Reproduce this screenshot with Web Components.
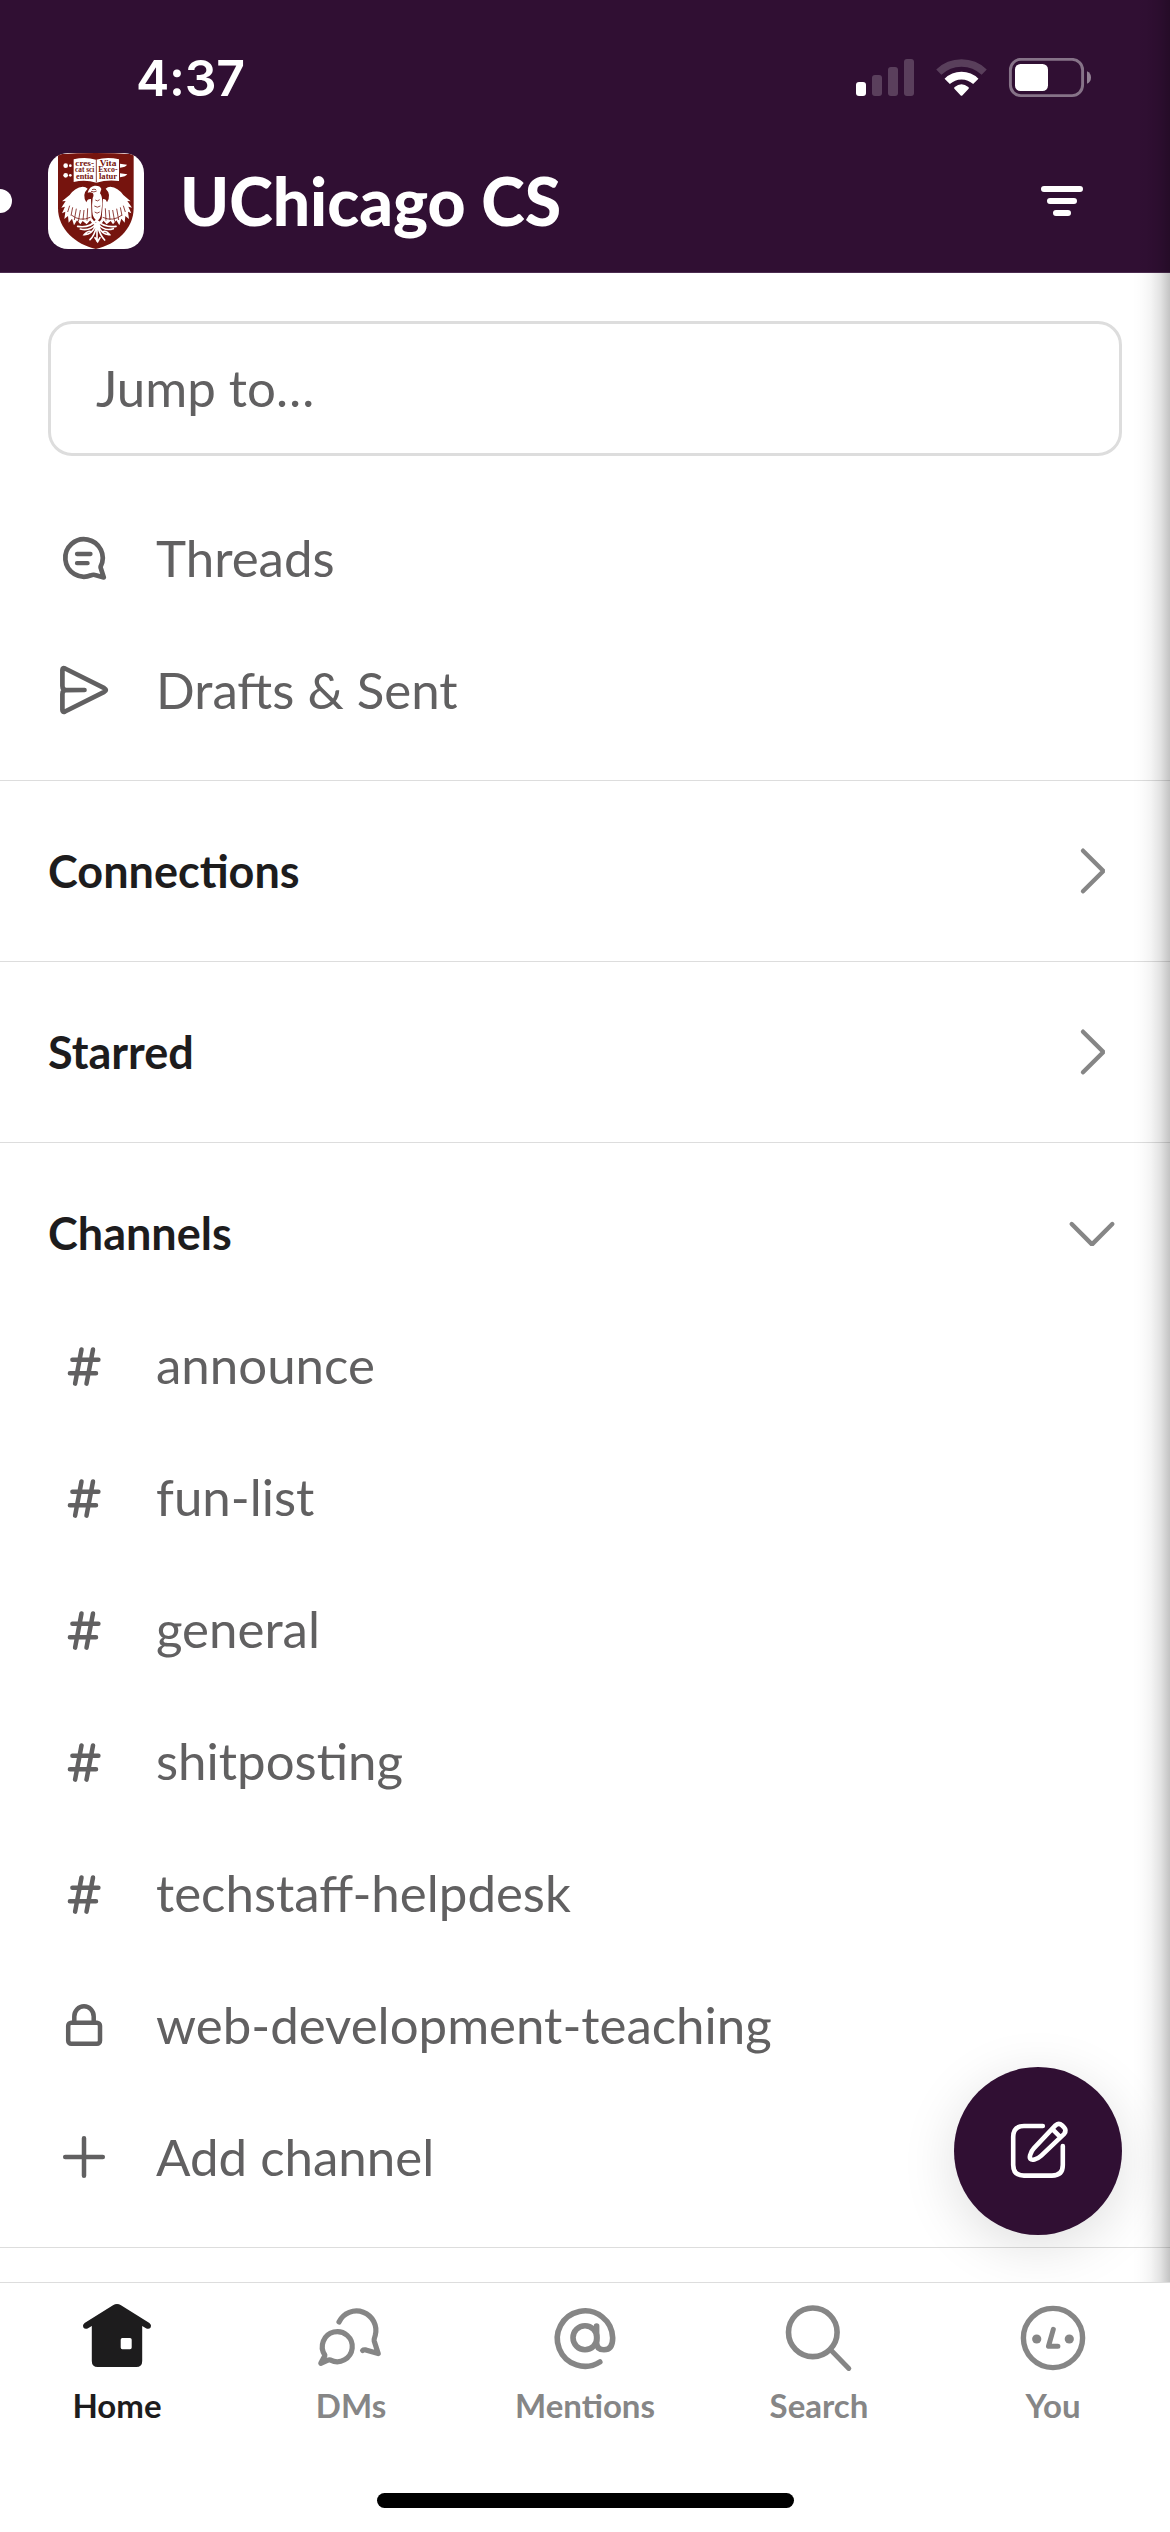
<!DOCTYPE html>
<html lang="en">
<head>
<meta charset="utf-8">
<title>UChicago CS</title>
<style>
html,body{margin:0;padding:0;background:#fff}
body{width:1170px;height:2532px;overflow:hidden;font-family:Lato,"Open Sans",sans-serif;-webkit-font-smoothing:antialiased}
</style>
</head>
<body>
<app-shell>
  <status-bar slot="top" time="4:37"></status-bar>
  <workspace-header slot="top">UChicago CS</workspace-header>
  <jump-field>Jump to…</jump-field>
  <list-group>
    <nav-row icon="threads">Threads</nav-row>
    <nav-row icon="send">Drafts &amp; Sent</nav-row>
  </list-group>
  <section-header icon="right">Connections</section-header>
  <section-header icon="right">Starred</section-header>
  <section-header icon="down" open>Channels</section-header>
  <list-group>
    <nav-row icon="hash">announce</nav-row>
    <nav-row icon="hash">fun-list</nav-row>
    <nav-row icon="hash">general</nav-row>
    <nav-row icon="hash">shitposting</nav-row>
    <nav-row icon="hash">techstaff-helpdesk</nav-row>
    <nav-row icon="lock">web-development-teaching</nav-row>
    <nav-row icon="plus">Add channel</nav-row>
  </list-group>
  <compose-button slot="fab"></compose-button>
  <tab-bar slot="bottom">
    <tab-item icon="home" active>Home</tab-item>
    <tab-item icon="dms">DMs</tab-item>
    <tab-item icon="mentions">Mentions</tab-item>
    <tab-item icon="search">Search</tab-item>
    <tab-item icon="you">You</tab-item>
  </tab-bar>
</app-shell>
<script>
// Every glyph is drawn around the origin of a 72x72 box.
const ICONS = {
  threads: '<g stroke-width="4.7"><path d="M16.6 8.6A18.7 18.7 0 1 0 7 17.3Q9 16.4 11 17L19.8 19.4L17 10.8Q16.4 9.6 16.6 8.6Z"/><path d="M-7-4H6.5M-7 5.2H3.6" stroke-width="4.3"/></g>',
  send: '<path stroke-width="4.7" d="M-21.6-4V-20Q-21.6-22.6-19-21.5L20.3-1.8Q23.4 0 20.3 1.8L-19 21.5Q-21.6 22.6-21.6 20V4Q-21.5.4-18.5.2L.5 0L-18.5-.2Q-21.5-.4-21.6-4Z"/>',
  hash: '<path stroke-width="4.5" d="M-11.6-5.2H14.4M-14.1 8.3H12M-2.5-15.5L-8.9 18.6M9-15.5L2.5 18.6"/>',
  lock: '<g stroke-width="4.5"><rect x="-15.8" y="-2.2" width="31.8" height="21" rx="3"/><path d="M-9.7-2.5V-8.5A9.7 10.2 0 0 1 9.7-8.5V-2.5"/></g>',
  plus: '<path stroke-width="4.5" d="M-18.8 0H18.8M0-18.8V18.8"/>',
  right: '<path stroke-width="4.4" stroke-linejoin="bevel" d="M-9-20.3L11.4 0L-9 20.3"/>',
  down: '<path stroke-width="4.4" stroke-linejoin="bevel" d="M-20.3-9L0 11.4L20.3-9"/>',
  filter: '<path stroke-width="6" d="M-18-12H18M-12 0H12M-6 12H6"/>',
  compose: '<g stroke-width="4.6"><path d="M4.8-25H-14Q-24.8-25-24.8-14V14Q-24.8 24.6-14 24.6H14Q24.8 24.6 24.8 14V-5"/><path d="M-7.8 3.5Q-6.8-.5-4-3.4L17.7-26.3Q20.9-29 24.2-26L26-24.2Q28.9-21 26.2-17.7L3.3 4.2Q.4 7-3.5 7.9Q-9.5 9.2-7.8 3.5ZM14.4-22.4L22.4-14.4" transform="translate(0 .5)"/></g>',
  home: '<path fill="currentColor" fill-rule="evenodd" stroke="none" d="M-4-32.7Q0-35.1 4-32.7L32.4-14.9Q34.8-13.1 33.8-10.7Q32-8.3 29.4-9.6L25.2-12V23Q25.2 29 19.2 29H-19.2Q-25.2 29-25.2 23V-12L-29.4-9.6Q-32-8.3-33.8-10.7Q-34.8-13.1-32.4-14.9ZM5.3 0Q3.7 0 3.7 1.8V9.4Q3.7 11.2 5.3 11.2H13Q14.7 11.2 14.7 9.4V1.8Q14.7 0 13 0Z"/>',
  dms: '<g stroke-width="5.2"><path d="M-26.2 17A15 15 0 1 1-20.4 22.1Q-22 21.6-23.6 22.4L-30.2 25.3L-26.6 18.6Q-26 17.8-26.2 17Z"/><path d="M-12-16A19.4 19.4 0 0 1 24.2-2.500Q22.800 1.500 23.200 3L27.200 15.600L14.800 11.900Q12.600 11.500 11.600 12.500"/></g>',
  mentions: '<g stroke-width="5.6"><circle cx="0" cy="-.2" r="12"/><path d="M11.6-12V4.8Q11.8 11.8 19 11.8Q27.7 11.8 27.7-.2A27.7 27.7 0 1 0 14.8 24"/></g>',
  search: '<g stroke-width="5.6"><circle cx="-6.2" cy="-5.7" r="24.3"/><path d="M12.3 12.6L29.8 30.4" stroke-width="5"/></g>',
  you: '<g stroke-width="5.4"><circle cx="0" cy="0" r="29.6"/><path stroke-width="5" d="M.3-8.6L-4.5 8.3H4.9"/></g><g fill="currentColor" stroke="none"><circle cx="-16.3" cy="1" r="4.6"/><circle cx="16.3" cy="1" r="4.6"/></g>'
};

function define(name, css, html) {
  customElements.define(name, class extends HTMLElement {
    constructor() {
      super();
      const root = this.attachShadow({ mode: 'open' });
      root.innerHTML = '<style>' + css + '</style>' + (typeof html === 'function' ? html(this) : html);
    }
  });
}

define('ui-icon',
  ':host{display:block;flex:none;width:72px;height:72px}svg{display:block;overflow:visible}',
  el => `<svg width="72" height="72" viewBox="-36 -36 72 72" fill="none" stroke="currentColor" stroke-linecap="round" stroke-linejoin="round">${ICONS[el.getAttribute('name')]}</svg>`);

define('app-shell',
  `:host{display:flex;flex-direction:column;width:1170px;height:2532px;background:#fff;overflow:hidden}
   .view{position:relative;flex:1;display:flex;flex-direction:column;min-height:0;overflow:hidden}
   header{flex:none;height:272px;background:#300f33;border-bottom:1px solid #4c2c50;color:#fff}
   main{flex:1;display:flex;flex-direction:column;padding-top:48px;min-height:0}
   .fab{position:absolute;right:48px;bottom:47px}
   .edge{position:absolute;top:0;right:0;bottom:0;width:38px;pointer-events:none;
     background:linear-gradient(90deg,rgba(0,0,0,0),rgba(0,0,0,.012) 25%,rgba(0,0,0,.045) 50%,rgba(0,0,0,.115) 75%,rgba(0,0,0,.235))}`,
  `<div class="view"><header><slot name="top"></slot></header><main><slot></slot></main>
   <div class="fab"><slot name="fab"></slot></div><div class="edge"></div></div><slot name="bottom"></slot>`);

define('status-bar',
  `:host{display:flex;justify-content:space-between;align-items:center;height:156px;box-sizing:border-box;padding:0 79px 0 136px}
   .time{font:600 50px/60px Inter,sans-serif;letter-spacing:-.3px}
   svg{display:block}`,
  el => `<div class="time">${el.getAttribute('time')}</div>
   <svg width="235" height="40" viewBox="856 58 235 40">
    <g fill="#fff"><rect x="856" y="82" width="10" height="14" rx="3"/>
     <g opacity=".2"><rect x="872" y="75" width="10" height="21" rx="3"/><rect x="888" y="67" width="10" height="29" rx="3"/><rect x="904" y="59" width="10" height="37" rx="3"/></g></g>
    <g fill="none" stroke="#fff"><path opacity=".2" stroke-width="7.4" d="M938.8 72.1A32.8 32.8 0 0 1 984.2 72.1"/><path stroke-width="7.6" d="M947.2 81.4A20.5 20.5 0 0 1 975.8 81.4"/></g>
    <path fill="#fff" d="M954.6 89Q953.4 87.9 954.7 86.9Q961.5 81.7 968.3 86.9Q969.6 87.9 968.4 89L962.3 95.4Q961.5 96.2 960.7 95.4Z"/>
    <rect x="1010.4" y="59.4" width="72.2" height="36.2" rx="10.5" fill="none" stroke="#fff" stroke-opacity=".42" stroke-width="2.9"/>
    <rect x="1015" y="64" width="33" height="27" rx="5.5" fill="#fff"/>
    <path d="M1087 71.2Q1091 73 1091 77.5Q1091 82 1087 83.8Z" fill="#fff" fill-opacity=".48"/>
   </svg>`);

define('crest-logo',
  ':host{display:block;flex:none;width:96px;height:96px;border-radius:20px;overflow:hidden;background:#fff}svg{display:block}',
  `<svg width="96" height="96" viewBox="54 39 288 288">
    <path fill="#76140e" d="M84 43Q197 35 311 43V205C311 267 258 314 197.500 327C137 314 84 267 84 205Z"/>
    <g fill="#fff">
     <path d="M131 58Q166 50 198 59Q232 50 267 58V123Q232 118 199 128Q166 118 131 126Z"/>
     <circle cx="107" cy="77" r="7"/><circle cx="107" cy="106" r="7"/><circle cx="121" cy="77" r="4"/><circle cx="121" cy="106" r="4"/>
     <path d="M270 71L291 74Q288 81 270 83ZM270 100L292 103Q287 110 270 112Z"/>
     <path d="M173 158Q178 139 194 137Q211 136 214 147L210 160Q217 167 217 190L213 224Q210 239 201 242Q188 235 187 216Q185 194 188 174Q193 165 188 159Q181 155 173 158Z"/>
     <path d="M158 140Q135 142 119 165L96 184L107 183L94 203L105 200L96 220L106 215L103 237L114 228L116 248L126 236L132 256L141 241L151 253L158 243L170 253L185 236L183 177Q172 176 169 187Q155 163 173 146Q167 140 158 140Z"/>
     <path d="M241 140Q264 142 280 165L302 184L292 183L306 203L295 200L304 220L294 215L297 237L286 228L284 248L274 236L268 256L259 241L249 253L242 243L230 253L215 236L219 177Q228 176 231 187Q245 163 227 146Q233 140 241 140Z"/>
    </g>
    <g fill="none" stroke="#76140e" stroke-width="2.4">
     <path d="M199 58V127M186 149Q192 146 198 149M183 154Q192 158 200 153M196 180Q202 186 209 179M193 198Q202 205 211 198M194 216Q201 223 209 216"/>
     <path d="M119 197L113 216M128 202L123 227M139 206L133 240M151 210L145 245M162 210L159 240M173 205L171 242M124 225Q150 246 181 232"/>
     <path d="M280 197L286 216M271 202L276 227M260 206L266 240M248 210L254 245M237 210L240 240M226 205L228 242M276 225Q250 246 218 232"/>
    </g>
    <g fill="none" stroke="#fff" stroke-width="5" stroke-linecap="round">
     <path d="M201 239V304M199 241Q178 265 143 259M201 242Q225 264 258 259M198 252Q178 275 151 267M204 252Q224 275 250 266M198 255Q185 285 163 284Q175 270 184 275M204 255Q216 286 239 284Q229 270 217 275M200 259Q193 287 180 299M203 259Q210 286 224 300M195 293L203 305L210 293"/>
     <path stroke-width="8" d="M184 239Q201 266 218 239"/>
    </g>
    <g fill="#76140e" font-family="Liberation Serif,serif" font-size="25" font-weight="700" text-anchor="middle">
     <text x="164" y="79" textLength="56" lengthAdjust="spacingAndGlyphs">cres-</text><text x="164" y="97" textLength="58" lengthAdjust="spacingAndGlyphs">cat sci</text><text x="164" y="116" textLength="52" lengthAdjust="spacingAndGlyphs">entia</text>
     <text x="234" y="79" textLength="50" lengthAdjust="spacingAndGlyphs">Vita</text><text x="234" y="97" textLength="58" lengthAdjust="spacingAndGlyphs">Exco-</text><text x="234" y="116" textLength="54" lengthAdjust="spacingAndGlyphs">latur</text>
    </g>
   </svg>`);

define('workspace-header',
  `:host{display:flex;align-items:center;height:90px;padding:0 72px 0 0}
   .dot{width:12px;height:24px;border-radius:0 12px 12px 0;background:#fff;margin-right:36px}
   h1{flex:1;margin:0 0 0 36px;font-size:66px;line-height:80px;font-weight:900}`,
  '<div class="dot"></div><crest-logo></crest-logo><h1><slot></slot></h1><ui-icon name="filter"></ui-icon>');

define('jump-field',
  ':host{display:flex;flex:none;align-items:center;box-sizing:border-box;height:135px;margin:0 48px 36px;padding:0 45px 1px;border:3px solid #ddd;border-radius:24px;font-size:51px;line-height:62px;color:#616061}',
  '<span><slot></slot></span>');

define('list-group', ':host{display:flex;flex:none;flex-direction:column;padding-bottom:24px;border-bottom:1px solid #ddd}', '<slot></slot>');
define('nav-row',
  ':host{display:flex;align-items:center;gap:36px;height:132px;padding-left:48px;color:#616061;font-size:51px;line-height:62px}',
  el => `<ui-icon name="${el.getAttribute('icon')}"></ui-icon><span><slot></slot></span>`);

define('section-header',
  `:host{display:flex;flex:none;align-items:center;justify-content:space-between;height:180px;padding:0 42px 0 48px;border-bottom:1px solid #ddd;font-size:45px;line-height:54px;font-weight:700;color:#1d1c1d}
   :host([open]){height:132px;padding-top:24px;border-bottom:0}
   ui-icon{color:#868686}`,
  el => `<span><slot></slot></span><ui-icon name="${el.getAttribute('icon')}"></ui-icon>`);

define('compose-button',
  ':host{display:flex;align-items:center;justify-content:center;width:168px;height:168px;border-radius:50%;background:#300f33;color:#fff;box-shadow:0 12px 54px rgba(0,0,0,.13)}',
  '<ui-icon name="compose"></ui-icon>');

define('tab-bar',
  `:host{display:flex;flex:none;flex-direction:column;align-items:center;height:249px;border-top:1px solid #ddd;background:#fff}
   nav{display:flex;width:100%;height:210px}
   .grip{width:417px;height:15px;border-radius:8px;background:#000}`,
  '<nav><slot></slot></nav><div class="grip"></div>');

define('tab-item',
  `:host{flex:1;display:flex;flex-direction:column;align-items:center;padding-top:19px;color:#868686;font-size:33px;line-height:40px;font-weight:700}
   :host([active]){color:#1d1c1d}span{margin-top:11px}`,
  el => `<ui-icon name="${el.getAttribute('icon')}"></ui-icon><span><slot></slot></span>`);
</script>
</body>
</html>
